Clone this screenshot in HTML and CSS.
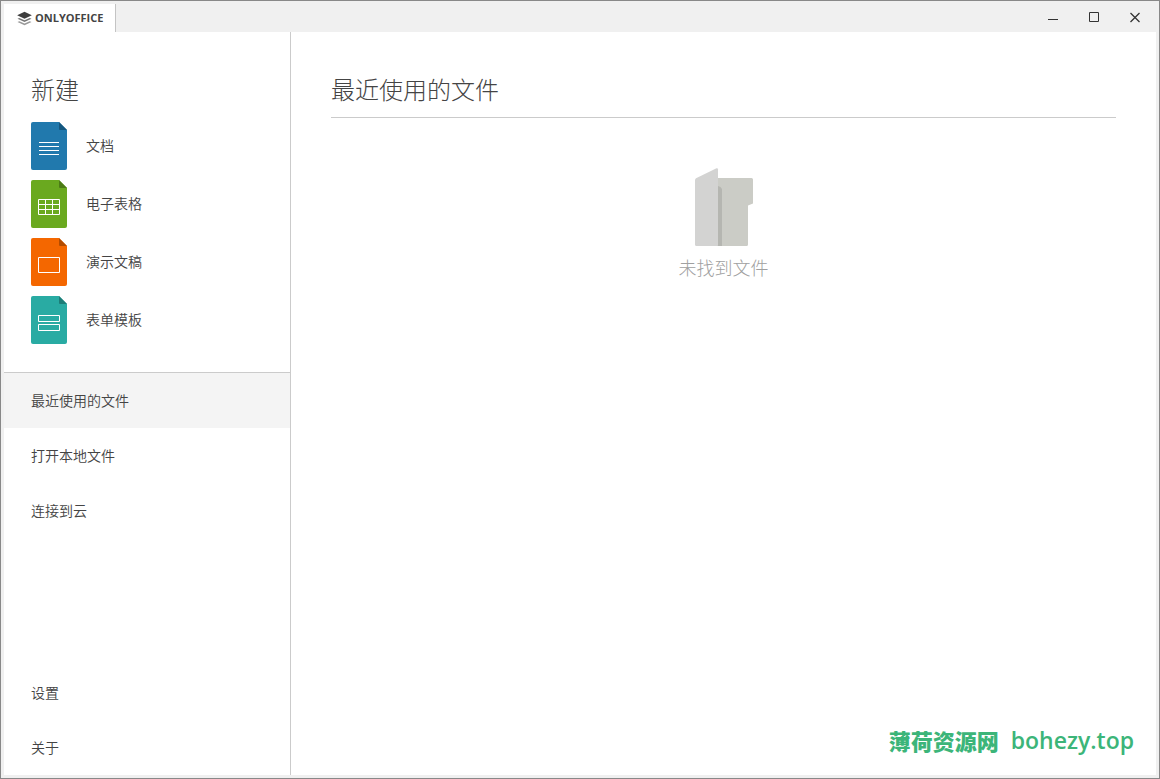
FILE: index.html
```html
<!DOCTYPE html>
<html lang="zh-CN">
<head>
<meta charset="utf-8">
<title>ONLYOFFICE</title>
<link rel="stylesheet" href="styles.css">
</head>
<body>
<div class="window">
  <header class="titlebar">
    <button class="tab" type="button">
      <svg class="tab-logo" width="15" height="15" viewBox="0 0 16 16" aria-hidden="true">
        <path d="M.5 8.300 2.500 7.400 8 9.900l5.500-2.500 2 .9L8 11.800z" fill="#777"/>
        <path d="M.5 11.700 2.500 10.800 8 13.300l5.500-2.500 2 .9L8 15.200z" fill="#999"/>
        <path d="M8 .7 15.800 4.500 8 8.300.2 4.500z" fill="#3d3d3d"/>
      </svg>
      <span>ONLYOFFICE</span>
    </button>
    <div class="controls">
      <button class="control" type="button" aria-label="最小化"><svg width="11" height="11" viewBox="0 0 11 11"><path d="M0 7h10v1H0z" fill="#333"/></svg></button>
      <button class="control" type="button" aria-label="最大化"><svg width="11" height="11" viewBox="0 0 11 11"><path d="M.5.5h9v9h-9z" fill="none" stroke="#333"/></svg></button>
      <button class="control" type="button" aria-label="关闭"><svg width="11" height="11" viewBox="0 0 11 11"><path d="M.5 1l9 9M9.500 1l-9 9" fill="none" stroke="#333" stroke-width="1.300"/></svg></button>
    </div>
  </header>
  <div class="content">
    <aside class="sidebar">
      <section class="create">
        <h2 class="heading">新建</h2>
        <button class="create-item" type="button">
          <svg width="36" height="48" viewBox="0 0 36 48" aria-hidden="true">
            <path d="M2 0h26l8 8v38a2 2 0 0 1-2 2H2a2 2 0 0 1-2-2V2a2 2 0 0 1 2-2z" fill="#2179ad"/><path d="M28 0l8 8h-7a1 1 0 0 1-1-1z" fill="#15577f"/>
            <path d="M8 20.500h20M8 24.500h20M8 28.500h20M8 32.500h20" stroke="#fff"/>
          </svg>
          <span class="create-label">文档</span>
        </button>
        <button class="create-item" type="button">
          <svg width="36" height="48" viewBox="0 0 36 48" aria-hidden="true">
            <path d="M2 0h26l8 8v38a2 2 0 0 1-2 2H2a2 2 0 0 1-2-2V2a2 2 0 0 1 2-2z" fill="#6aa91f"/><path d="M28 0l8 8h-7a1 1 0 0 1-1-1z" fill="#4c7b16"/>
            <path d="M7.500 19.500h21v15h-21zM7 24.500h22M7 29.500h22M14.500 19v16M21.500 19v16" fill="none" stroke="#fff"/>
          </svg>
          <span class="create-label">电子表格</span>
        </button>
        <button class="create-item" type="button">
          <svg width="36" height="48" viewBox="0 0 36 48" aria-hidden="true">
            <path d="M2 0h26l8 8v38a2 2 0 0 1-2 2H2a2 2 0 0 1-2-2V2a2 2 0 0 1 2-2z" fill="#f46700"/><path d="M28 0l8 8h-7a1 1 0 0 1-1-1z" fill="#b34c00"/>
            <path d="M7.500 19.500h21v15h-21z" fill="none" stroke="#fff"/>
          </svg>
          <span class="create-label">演示文稿</span>
        </button>
        <button class="create-item" type="button">
          <svg width="36" height="48" viewBox="0 0 36 48" aria-hidden="true">
            <path d="M2 0h26l8 8v38a2 2 0 0 1-2 2H2a2 2 0 0 1-2-2V2a2 2 0 0 1 2-2z" fill="#29aba3"/><path d="M28 0l8 8h-7a1 1 0 0 1-1-1z" fill="#1d7d77"/>
            <path d="M7.500 19.500h21v6h-21zM7.500 28.500h21v6h-21z" fill="none" stroke="#fff"/>
          </svg>
          <span class="create-label">表单模板</span>
        </button>
      </section>
      <nav class="menu">
        <button class="menu-item menu-item-active" type="button">最近使用的文件</button>
        <button class="menu-item" type="button">打开本地文件</button>
        <button class="menu-item" type="button">连接到云</button>
        <div class="menu-space"></div>
        <button class="menu-item" type="button">设置</button>
        <button class="menu-item" type="button">关于</button>
      </nav>
    </aside>
    <main class="recent">
      <h1 class="heading recent-heading">最近使用的文件</h1>
      <div class="empty">
        <svg width="58" height="78" viewBox="0 0 58 78" aria-hidden="true">
          <path d="M20 10h36.500a1.500 1.500 0 0 1 1.500 1.500V35.500L53 37.500V76.500a1.500 1.500 0 0 1-1.500 1.500H20z" fill="#cbccc6"/>
          <path d="M23 18l2.500 1 1.500 2v57h-4z" fill="#b5b6b1"/>
          <path d="M0 11.500 1 10.200 21.500.3Q23 0 23 1.500V76.500a1.500 1.500 0 0 1-1.500 1.500H1.500A1.500 1.500 0 0 1 0 76.500z" fill="#d3d3d2"/>
        </svg>
        <p class="empty-text">未找到文件</p>
      </div>
    </main>
  </div>
  <div class="watermark"><span class="watermark-name">薄荷资源网</span><span class="watermark-site">bohezy.top</span></div>
</div>
</body>
</html>
```
FILE: styles.css
```css
* {
  box-sizing: border-box;
}

body {
  margin: 0;
  color: #444;
  font: 14px/20px "Open Sans", "Noto Sans CJK SC", sans-serif;
}

button {
  margin: 0;
  padding: 0;
  border: 0;
  background: none;
  color: inherit;
  font: inherit;
  text-align: left;
}

svg {
  display: block;
  flex: none;
}

.window {
  position: relative;
  display: flex;
  flex-direction: column;
  min-height: 100vh;
  padding: 3px;
  border: 1px solid #888;
  background: #f0f0f0;
}

.titlebar {
  display: flex;
  justify-content: space-between;
  height: 28px;
}

.tab {
  display: flex;
  align-items: center;
  gap: 3px;
  padding: 0 12px 0 13px;
  border-right: 1px solid #c4c4c4;
  background: #fff;
  font-size: 11px;
  font-weight: 700;
}

.controls {
  display: flex;
}

.control {
  display: flex;
  align-items: center;
  justify-content: center;
  width: 41px;
  padding-bottom: 2px;
}

.content {
  display: flex;
  flex: 1;
  background: #fff;
}

.sidebar {
  display: flex;
  flex: none;
  flex-direction: column;
  width: 287px;
  border-right: 1px solid #cbcbcb;
  font-family: "Noto Sans CJK SC", sans-serif;
  font-weight: 350;
}

.heading {
  margin: 0;
  font: 300 24px/32px "Noto Sans CJK SC", sans-serif;
}

.create {
  display: flex;
  flex-direction: column;
  gap: 10px;
  padding: 41px 27px 28px;
}

.create .heading {
  margin-bottom: 7px;
}

.create-item {
  display: flex;
  align-items: center;
  gap: 19px;
}

.create-label {
  padding-bottom: 2px;
}

.menu {
  display: flex;
  flex: 1;
  flex-direction: column;
  border-top: 1px solid #cbcbcb;
}

.menu-item {
  height: 55px;
  padding: 0 27px 2px;
}

.menu-item-active {
  background: #f4f4f4;
}

.menu-space {
  flex: 1;
}

.recent {
  flex: 1;
  padding: 41px 40px;
}

.recent-heading {
  padding-bottom: 12px;
  border-bottom: 1px solid #cbcbcb;
}

.empty {
  display: flex;
  flex-direction: column;
  align-items: center;
  gap: 9px;
  padding-top: 50px;
}

.empty-text {
  margin: 0;
  color: #a0a0a0;
  font: 300 18px/24px "Noto Sans CJK SC", sans-serif;
}

.watermark {
  position: absolute;
  right: 25px;
  bottom: 22px;
  display: flex;
  align-items: center;
  gap: 12px;
  color: #3cb579;
}

.watermark-name {
  font: 900 22px/32px "Noto Sans CJK SC", sans-serif;
}

.watermark-site {
  font: 600 23px/32px "Open Sans", sans-serif;
}
```
